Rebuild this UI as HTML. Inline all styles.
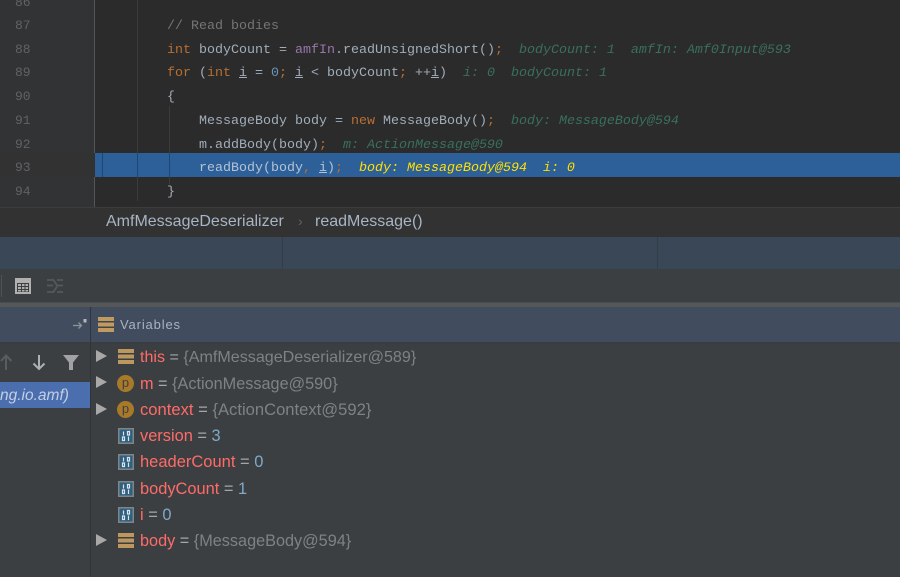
<!DOCTYPE html>
<html><head><meta charset="utf-8">
<style>
html,body{margin:0;padding:0;background:#3c3f41;}
#r{position:relative;width:900px;height:577px;overflow:hidden;background:#3c3f41;font-family:"Liberation Sans",sans-serif;}
.a{position:absolute;}
.n{position:absolute;left:15px;font:13px/16px "Liberation Mono",monospace;color:#606366;white-space:pre;}
.c{position:absolute;left:167px;font:13.33px/18px "Liberation Mono",monospace;color:#a0adba;white-space:pre;}
.k{color:#b86f30}.h{color:#39705b;font-style:italic}.y{color:#ffe000;font-style:italic}.g{color:#757575}.p{color:#9876aa}.b{color:#6897bb}.u{text-decoration:underline}
.v{position:absolute;left:140px;font-size:16px;line-height:20px;color:#a4a7a9;white-space:pre;}
.v b{font-weight:normal;color:#ff6b68}.v i{font-style:normal;color:#7d8284}.v s{text-decoration:none;color:#7fa9c9}
.tri{position:absolute;left:96px;width:0;height:0;border-left:11px solid #a8a8a8;border-top:6.5px solid transparent;border-bottom:6.5px solid transparent;}
.st{position:absolute;left:118px;width:16px;height:15px;}
.pp{position:absolute;left:117px;width:17px;height:17px;border-radius:50%;background:#a9792a;color:#3c3f41;font-size:13px;line-height:16px;text-align:center;}
.f{position:absolute;left:118px;width:16px;height:16px;}
</style></head><body>
<div id="r">
<div class="a" style="left:0;top:0;width:900px;height:207px;background:#2b2b2b"></div>
<div class="a" style="left:0;top:0;width:94px;height:207px;background:#313335"></div>
<div class="a" style="left:94px;top:0;width:1px;height:207px;background:#555"></div>
<div class="a" style="left:137px;top:0;width:1px;height:201px;background:#3b3b3b"></div>
<div class="a" style="left:169px;top:106px;width:1px;height:78px;background:#3b3b3b"></div>
<div class="a" style="left:0;top:153px;width:95px;height:24px;background:#323232"></div>
<div class="a" style="left:95px;top:153px;width:805px;height:24px;background:#2d5f99"></div>
<div class="a" style="left:102px;top:153px;width:1px;height:24px;background:#22456c"></div>
<div class="a" style="left:137px;top:153px;width:1px;height:24px;background:#22456c"></div>
<div class="a" style="left:169px;top:153px;width:1px;height:24px;background:#22456c"></div>

<div class="n" style="top:-5px">86</div>
<div class="n" style="top:18px">87</div>
<div class="n" style="top:42px">88</div>
<div class="n" style="top:65px">89</div>
<div class="n" style="top:89px">90</div>
<div class="n" style="top:113px">91</div>
<div class="n" style="top:137px">92</div>
<div class="n" style="top:160px">93</div>
<div class="n" style="top:184px">94</div>

<div class="c g" style="top:18px">// Read bodies</div>
<div class="c" style="top:42px"><span class="k">int</span> bodyCount = <span class="p">amfIn</span>.readUnsignedShort()<span class="k">;</span>  <span class="h">bodyCount: 1  amfIn: Amf0Input@593</span></div>
<div class="c" style="top:65px"><span class="k">for</span> (<span class="k">int</span> <span class="u">i</span> = <span class="b">0</span><span class="k">;</span> <span class="u">i</span> &lt; bodyCount<span class="k">;</span> ++<span class="u">i</span>)  <span class="h">i: 0  bodyCount: 1</span></div>
<div class="c" style="top:89px">{</div>
<div class="c" style="top:113px">    MessageBody body = <span class="k">new</span> MessageBody()<span class="k">;</span>  <span class="h">body: MessageBody@594</span></div>
<div class="c" style="top:137px">    m.addBody(body)<span class="k">;</span>  <span class="h">m: ActionMessage@590</span></div>
<div class="c" style="top:160px;color:#b4c3d3">    readBody(body<span class="k">,</span> <span class="u">i</span>)<span class="k">;</span>  <span class="y">body: MessageBody@594  i: 0</span></div>
<div class="c" style="top:184px">}</div>

<div class="a" style="left:0;top:207px;width:900px;height:30px;background:#323232;border-top:1px solid #3c3c3c;box-sizing:border-box"></div>
<div class="a" style="left:106px;top:212px;font-size:16px;line-height:20px;color:#a7b5c4;white-space:pre">AmfMessageDeserializer</div>
<div class="a" style="left:298px;top:211px;font-size:14px;line-height:20px;color:#5f6366">›</div>
<div class="a" style="left:315px;top:212px;font-size:16px;line-height:20px;color:#a7b5c4;white-space:pre">readMessage()</div>

<div class="a" style="left:0;top:237px;width:900px;height:32px;background:#3a4756"></div>
<div class="a" style="left:282px;top:237px;width:1px;height:32px;background:#343c45"></div>
<div class="a" style="left:657px;top:237px;width:1px;height:32px;background:#343c45"></div>

<div class="a" style="left:0;top:269px;width:900px;height:34px;background:#3c3f41"></div>
<div class="a" style="left:1px;top:275px;width:1px;height:22px;background:#505354"></div>
<svg class="a" style="left:15px;top:278px" width="16" height="16" viewBox="0 0 16 16"><rect x="0" y="0" width="16" height="16" fill="#b0b0b0"/><rect x="2" y="5" width="12" height="9" fill="#3c3f41"/><path d="M3 6h3v2H3zM7 6h2.500v2H7zM10.500 6H13v2h-2.500zM3 9h3v2H3zM7 9h2.500v2H7zM10.500 9H13v2h-2.500zM3 12h3v1.500H3zM7 12h2.500v1.500H7zM10.500 12H13v1.500h-2.500z" fill="#b0b0b0"/></svg>
<svg class="a" style="left:47px;top:278px" width="17" height="16" viewBox="0 0 17 16"><path d="M0 2h6.500l3.500 5.500H16M0 7.500h6M10 2h6M0 14h6.500L10 8.500M10 14h6" fill="none" stroke="#565859" stroke-width="1.700"/></svg>

<div class="a" style="left:0;top:302px;width:900px;height:1px;background:#494b4c"></div>
<div class="a" style="left:0;top:303px;width:900px;height:4px;background:#555857"></div>
<div class="a" style="left:0;top:307px;width:900px;height:35px;background:#414c5f"></div>
<div class="a" style="left:0;top:342px;width:900px;height:2px;background:#3a3d40"></div>
<div class="a" style="left:90px;top:307px;width:1px;height:270px;background:#323437"></div>
<svg class="a" style="left:73px;top:318px" width="15" height="13" viewBox="0 0 15 13"><path d="M0 7.500h8M5.500 4.500l3 3-3 3" fill="none" stroke="#8f9499" stroke-width="1.300"/><rect x="10.500" y="1" width="3" height="3.500" fill="#b4b6b8"/></svg>
<div class="st" style="left:98px;top:317px;background:linear-gradient(#c19a60 0 4px,#3f4550 4px 5.500px,#c19a60 5.500px 9.500px,#3f4550 9.500px 11px,#c19a60 11px)"></div>
<div class="a" style="left:120px;top:316px;font-size:13px;line-height:17px;color:#a9b4c0;letter-spacing:.85px">Variables</div>

<svg class="a" style="left:0;top:352px" width="85" height="20" viewBox="0 0 85 20"><path d="M6 18V4M1 9l5-5.500L11.500 9" fill="none" stroke="#5a5d5f" stroke-width="2"/><path d="M39 3v14M33.500 11.500L39 17l5.500-5.500" fill="none" stroke="#aeb0b1" stroke-width="2"/><path d="M63 3h16l-6 7.500V18h-4v-7.500z" fill="#a0a2a3"/></svg>
<div class="a" style="left:0;top:382px;width:90px;height:26px;background:#4b6eaf"></div>
<div class="a" style="left:0;top:387px;width:90px;font-size:15.5px;line-height:18px;color:#c3cfe2;font-style:italic;white-space:pre;overflow:hidden">ng.io.amf)</div>

<div class="tri" style="top:350px"></div>
<div class="tri" style="top:376px"></div>
<div class="tri" style="top:403px"></div>
<div class="tri" style="top:534px"></div>

<div class="st" style="top:349px;background:linear-gradient(#bd9760 0 4px,#3c3f41 4px 5.500px,#bd9760 5.500px 9.500px,#3c3f41 9.500px 11px,#bd9760 11px)"></div>
<div class="pp" style="top:375px">p</div>
<div class="pp" style="top:401px">p</div>
<div class="st" style="top:533px;background:linear-gradient(#bd9760 0 4px,#3c3f41 4px 5.500px,#bd9760 5.500px 9.500px,#3c3f41 9.500px 11px,#bd9760 11px)"></div>

<svg class="f" style="top:428px" viewBox="0 0 16 16"><rect x=".75" y=".75" width="14.500" height="14.500" fill="#2f6080" stroke="#7f8689" stroke-width="1.500"/><path d="M5.500 3.500v4M9.500 3.500h2v3.500h-2zM4.500 9h2v3.500h-2zM10.500 8.500v4.500" fill="none" stroke="#dbe3e8" stroke-width="1.200"/></svg>
<svg class="f" style="top:454px" viewBox="0 0 16 16"><rect x=".75" y=".75" width="14.500" height="14.500" fill="#2f6080" stroke="#7f8689" stroke-width="1.500"/><path d="M5.500 3.500v4M9.500 3.500h2v3.500h-2zM4.500 9h2v3.500h-2zM10.500 8.500v4.500" fill="none" stroke="#dbe3e8" stroke-width="1.200"/></svg>
<svg class="f" style="top:481px" viewBox="0 0 16 16"><rect x=".75" y=".75" width="14.500" height="14.500" fill="#2f6080" stroke="#7f8689" stroke-width="1.500"/><path d="M5.500 3.500v4M9.500 3.500h2v3.500h-2zM4.500 9h2v3.500h-2zM10.500 8.500v4.500" fill="none" stroke="#dbe3e8" stroke-width="1.200"/></svg>
<svg class="f" style="top:507px" viewBox="0 0 16 16"><rect x=".75" y=".75" width="14.500" height="14.500" fill="#2f6080" stroke="#7f8689" stroke-width="1.500"/><path d="M5.500 3.500v4M9.500 3.500h2v3.500h-2zM4.500 9h2v3.500h-2zM10.500 8.500v4.500" fill="none" stroke="#dbe3e8" stroke-width="1.200"/></svg>

<div class="v" style="top:347px;font-size:16.1px"><b>this</b> = <i>{AmfMessageDeserializer@589}</i></div>
<div class="v" style="top:374px;font-size:16.25px"><b>m</b> = <i>{ActionMessage@590}</i></div>
<div class="v" style="top:400px;font-size:16.6px"><b>context</b> = <i>{ActionContext@592}</i></div>
<div class="v" style="top:426px;font-size:16.4px"><b>version</b> = <s>3</s></div>
<div class="v" style="top:452px;font-size:16.5px"><b>headerCount</b> = <s>0</s></div>
<div class="v" style="top:479px;font-size:16.4px"><b>bodyCount</b> = <s>1</s></div>
<div class="v" style="top:505px;font-size:16.4px"><b>i</b> = <s>0</s></div>
<div class="v" style="top:531px;font-size:16.25px"><b>body</b> = <i>{MessageBody@594}</i></div>
</div>
</body></html>
